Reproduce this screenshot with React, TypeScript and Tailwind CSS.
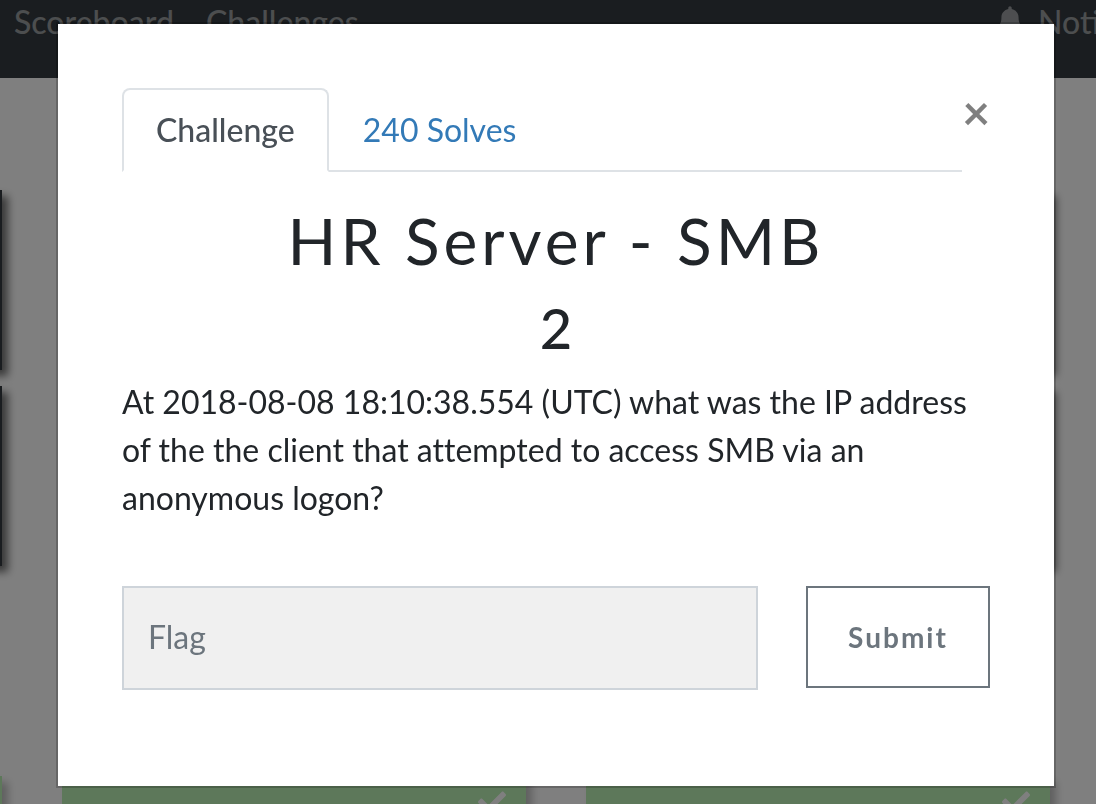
import { useState } from 'react';

const columns = ['left', 'middle', 'right'];

function CheckIcon() {
  return (
    <svg viewBox="0 0 512 512" className="w-7 h-7 fill-white" aria-hidden="true">
      <path d="M173.9 439.4 7.5 273c-10-10-10-26.200 0-36.200l36.200-36.200c10-10 26.200-10 36.200 0L192 312.700 432.100 72.600c10-10 26.200-10 36.200 0l36.200 36.200c10 10 10 26.200 0 36.200L210.100 439.400c-10 10-26.200 10-36.200 0z" />
    </svg>
  );
}

function BellIcon() {
  return (
    <svg viewBox="0 0 448 512" className="w-6 h-7 fill-current" aria-hidden="true">
      <path d="M224 512c35.300 0 64-28.700 64-64H160c0 35.300 28.700 64 64 64zm215.400-149.700c-19.300-20.800-55.500-52-55.500-154.300 0-77.700-54.500-139.900-127.900-155.200V32c0-17.700-14.300-32-32-32s-32 14.300-32 32v20.800C118.600 68.100 64.100 130.300 64.100 208c0 102.300-36.200 133.500-55.500 154.300-6 6.400-8.700 14.100-8.600 21.700.1 16.400 13 32 32.100 32h383.800c19.100 0 32-15.600 32.100-32 .1-7.600-2.600-15.300-8.600-21.700z" />
    </svg>
  );
}

function Navbar() {
  return (
    <nav className="flex h-[78px] items-start justify-between bg-[#343a40] pl-3.5 text-[32px] leading-[44px] font-medium text-white/50 whitespace-nowrap">
      <div className="flex gap-8">
        <a href="#scoreboard">Scoreboard</a>
        <a href="#challenges">Challenges</a>
      </div>
      <a href="#notifications" className="flex w-[98px] shrink-0 items-start gap-4">
        <span className="mt-1.5 shrink-0"><BellIcon /></span>
        Notifications
      </a>
    </nav>
  );
}

function Board() {
  return (
    <div className="flex justify-end gap-[60px] pt-28 pr-[46px]">
      {columns.map((column) => (
        <div key={column} className="flex w-[464px] shrink-0 flex-col gap-4">
          <div className="h-[180px] bg-[#343a40] shadow-[6px_6px_8px_rgba(0,0,0,0.55)]" />
          <div className="h-[180px] bg-[#343a40] shadow-[6px_6px_8px_rgba(0,0,0,0.55)]" />
          <div className="mt-[194px] flex h-[180px] items-start justify-end bg-[#bbf0b5] py-3 pr-5 shadow-[6px_6px_8px_rgba(0,0,0,0.25)]">
            <CheckIcon />
          </div>
        </div>
      ))}
    </div>
  );
}

function ChallengeModal() {
  const [tab, setTab] = useState('challenge');
  const [flag, setFlag] = useState('');

  const tabClass = '-mb-0.5 h-[84px] rounded-t-lg border-2 px-8 text-[32px] leading-[48px]';
  const activeClass = 'border-[#dee2e6] border-b-white bg-white font-medium text-[#495057]';
  const idleClass = 'border-transparent text-[#337ab7]';

  return (
    <div
      role="dialog"
      aria-modal="true"
      className="relative mx-auto mt-6 w-[996px] max-w-full bg-white px-16 pt-16 pb-24 text-[#212529] ring-2 ring-black/20"
    >
      <button type="button" aria-label="Close" className="absolute top-16 right-16 text-5xl leading-[48px] font-bold text-black/50">
        ×
      </button>

      <div role="tablist" className="mr-7 flex border-b-2 border-[#dee2e6]">
        <button
          type="button"
          role="tab"
          aria-selected={tab === 'challenge'}
          onClick={() => setTab('challenge')}
          className={`${tabClass} ${tab === 'challenge' ? activeClass : idleClass}`}
        >
          Challenge
        </button>
        <button
          type="button"
          role="tab"
          aria-selected={tab === 'solves'}
          onClick={() => setTab('solves')}
          className={`${tabClass} ${tab === 'solves' ? activeClass : idleClass}`}
        >
          240 Solves
        </button>
      </div>

      <h2 className="pt-8 text-center text-[64px] leading-[74px] tracking-[4px]">HR Server - SMB</h2>
      <h3 className="pt-4 text-center text-[56px] leading-[68px] font-medium">2</h3>

      <p className="mt-4 text-[32px] leading-[48px] [font-variant-ligatures:none]">
        At 2018-08-08 18:10:38.554 (UTC) what was the IP address of the the client that attempted to access SMB via an anonymous logon?
      </p>

      <form className="mt-16 flex items-start gap-12" onSubmit={(e) => e.preventDefault()}>
        <input
          type="text"
          aria-label="Flag"
          placeholder="Flag"
          value={flag}
          onChange={(e) => setFlag(e.target.value)}
          className="h-[104px] min-w-0 flex-1 border-2 border-[#ced4da] bg-[#f0f0f0] px-6 pb-1 text-[32px] placeholder:text-[#6c757d]"
        />
        <button
          type="submit"
          className="h-[102px] w-[184px] border-2 border-[#6c757d] text-[28px] font-bold tracking-[2px] text-[#6c757d]"
        >
          Submit
        </button>
      </form>
    </div>
  );
}

export default function App() {
  return (
    <div className="h-screen overflow-hidden bg-white font-['Lato',sans-serif]">
      <Navbar />
      <Board />
      <div className="fixed inset-0 overflow-hidden bg-black/50 pl-4">
        <ChallengeModal />
      </div>
    </div>
  );
}
